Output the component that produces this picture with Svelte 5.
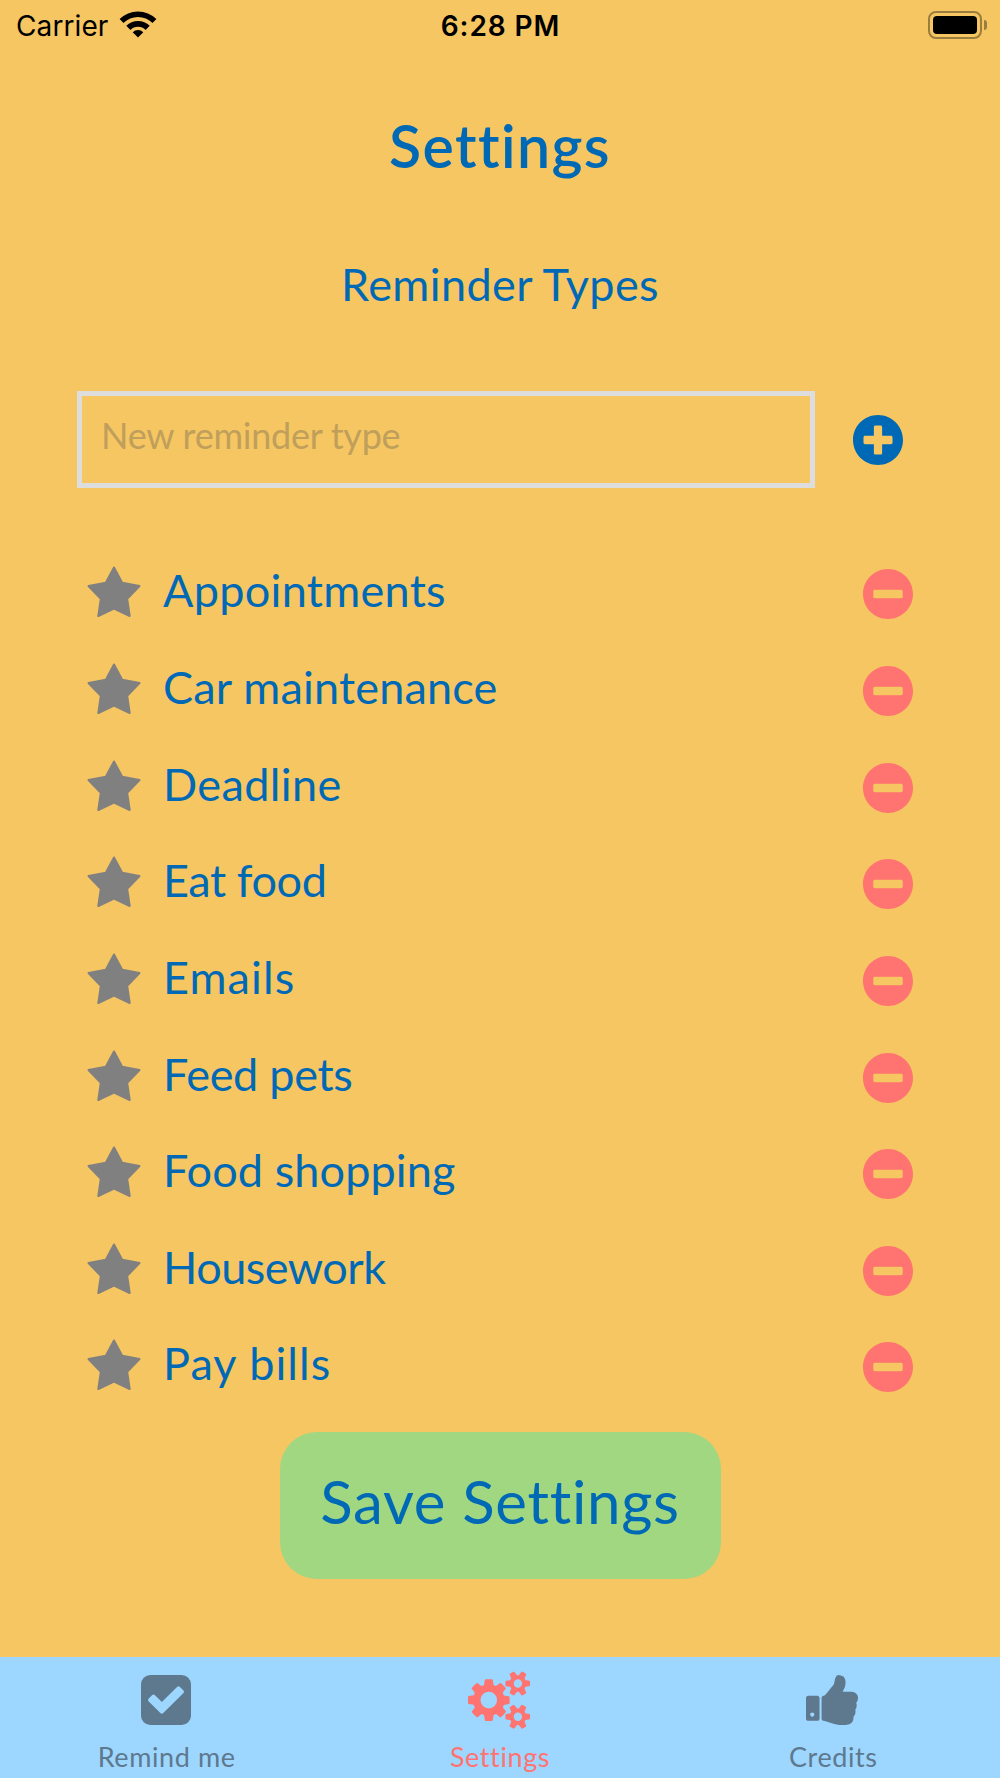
<script>
  let newType = $state('');

  let reminderTypes = $state([
    { name: 'Appointments', tracking: 0.3 },
    { name: 'Car maintenance', tracking: 0.2 },
    { name: 'Deadline', tracking: 0.4 },
    { name: 'Eat food', tracking: -0.4 },
    { name: 'Emails', tracking: 1.1 },
    { name: 'Feed pets', tracking: -0.3 },
    { name: 'Food shopping', tracking: 0.1 },
    { name: 'Housework', tracking: -0.5 },
    { name: 'Pay bills', tracking: 1.1 }
  ]);

  function addType() {
    const name = newType.trim();
    if (!name) return;
    reminderTypes.push({ name, tracking: 0 });
    newType = '';
  }

  function removeType(index) {
    reminderTypes.splice(index, 1);
  }
</script>

<div class="screen">
  <header class="status-bar">
    <div class="carrier">
      <span>Carrier</span>
      <svg class="wifi" viewBox="0 0 38 28">
        <path d="M19 27.500L13.700 22.200A7.500 7.500 0 0 1 24.300 22.200Z" />
        <path d="M7.300 15.800A16.500 16.500 0 0 1 30.700 15.800L26.600 19.900A10.700 10.700 0 0 0 11.400 19.900Z" />
        <path d="M.6 9.100A26 26 0 0 1 37.400 9.100L33.500 13A20.500 20.500 0 0 0 4.500 13Z" />
      </svg>
    </div>
    <span class="clock">6:28 PM</span>
    <div class="battery">
      <div class="battery-case"><div class="battery-level"></div></div>
      <div class="battery-nub"></div>
    </div>
  </header>

  <main>
    <h1>Settings</h1>
    <h2>Reminder Types</h2>

    <div class="new-type">
      <input type="text" bind:value={newType} placeholder="New reminder type" />
      <button class="icon-button" aria-label="Add" onclick={addType}>
        <svg class="round-icon add" viewBox="8 8 496 496">
          <path d="M256 8C119 8 8 119 8 256s111 248 248 248 248-111 248-248S393 8 256 8zM400 281c0 9-7 16-16 16h-87v87c0 9-7 16-16 16h-50c-9 0-16-7-16-16v-87h-87c-9 0-16-7-16-16v-50c0-9 7-16 16-16h87v-87c0-9 7-16 16-16h50c9 0 16 7 16 16v87h87c9 0 16 7 16 16v50z" />
        </svg>
      </button>
    </div>

    <ul>
      {#each reminderTypes as type, i}
        <li>
          <svg class="star" viewBox="0 0 54 52">
            <path d="M27 1.500L35.200 16.800L52.500 20L40.200 32.800L42.700 50L27 42.500L11.300 50L13.800 32.800L1.500 20L18.800 16.800Z" />
          </svg>
          <span class="type-name" style="letter-spacing: {type.tracking}px">{type.name}</span>
          <button class="icon-button" aria-label="Remove {type.name}" onclick={() => removeType(i)}>
            <svg class="round-icon remove" viewBox="8 8 496 496">
              <path d="M256 8C119 8 8 119 8 256s111 248 248 248 248-111 248-248S393 8 256 8zM126 297c-9 0-16-7-16-16v-50c0-9 7-16 16-16h260c9 0 16 7 16 16v50c0 9-7 16-16 16H126z" />
            </svg>
          </button>
        </li>
      {/each}
    </ul>

    <button class="save">Save Settings</button>
  </main>

  <nav>
    <a href="#remind" class="tab remind">
      <svg width="50" height="50" viewBox="128 128 1536 1536">
        <path d="M813 1299l614-614q19-19 19-45t-19-45l-102-102q-19-19-45-19t-45 19l-467 467-211-211q-19-19-45-19t-45 19l-102 102q-19 19-19 45t19 45l358 358q19 19 45 19t45-19zm851-883v960q0 119-84.500 203.500t-203.500 84.500h-960q-119 0-203.500-84.500t-84.500-203.500v-960q0-119 84.500-203.500t203.500-84.500h960q119 0 203.500 84.500t84.500 203.500z" />
      </svg>
      <span>Remind me</span>
    </a>
    <a href="#settings" class="tab settings active">
      <svg width="62.400" height="58.200" viewBox="-64 0 1920 1792">
        <path d="M832 896q0-106-75-181t-181-75-181 75-75 181 75 181 181 75 181-75 75-181zm768 512q0-52-38-90t-90-38-90 38-38 90q0 53 37.500 90.500t90.500 37.500 90.500-37.500 37.500-90.500zm0-1024q0-52-38-90t-90-38-90 38-38 90q0 53 37.500 90.500t90.500 37.500 90.500-37.500 37.500-90.500zm-384 421v185q0 10-7 19.500t-16 10.500l-155 24q-11 35-32 76 34 48 90 115 7 11 7 20 0 12-7 19-23 30-82.500 89.500t-78.500 59.500q-11 0-21-7l-115-90q-37 19-77 31-11 108-23 155-7 24-30 24h-186q-11 0-20-7.500t-10-17.500l-23-153q-34-10-75-31l-118 89q-7 7-20 7-11 0-21-8-144-133-144-160 0-9 7-19 10-14 41-53t47-61q-23-44-35-82l-152-24q-10-1-17-9.500t-7-19.500v-185q0-10 7-19.500t16-10.500l155-24q11-35 32-76-34-48-90-115-7-11-7-20 0-12 7-20 22-30 82-89t79-59q11 0 21 7l115 90q34-18 77-32 11-108 23-154 7-24 30-24h186q11 0 20 7.500t10 17.500l23 153q34 10 75 31l118-89q8-7 20-7 11 0 21 8 144 133 144 160 0 9-7 19-12 16-42 54t-45 60q23 48 34 82l152 23q10 2 17 10.500t7 19.500zm640 533v140q0 16-149 31-12 27-30 52 51 113 51 138 0 4-4 7-122 71-124 71-8 0-46-47t-52-68q-20 2-30 2t-30-2q-14 21-52 68t-46 47q-2 0-124-71-4-3-4-7 0-25 51-138-18-25-30-52-149-15-149-31v-140q0-16 149-31 13-29 30-52-51-113-51-138 0-4 4-7 4-2 35-20t59-34 30-16q8 0 46 46.500t52 67.500q20-2 30-2t30 2q51-71 92-112l6-2q4 0 124 70 4 3 4 7 0 25-51 138 17 23 30 52 149 15 149 31zm0-1024v140q0 16-149 31-12 27-30 52 51 113 51 138 0 4-4 7-122 71-124 71-8 0-46-47t-52-68q-20 2-30 2t-30-2q-14 21-52 68t-46 47q-2 0-124-71-4-3-4-7 0-25 51-138-18-25-30-52-149-15-149-31v-140q0-16 149-31 13-29 30-52-51-113-51-138 0-4 4-7 4-2 35-20t59-34 30-16q8 0 46 46.500t52 67.500q20-2 30-2t30 2q51-71 92-112l6-2q4 0 124 70 4 3 4 7 0 25-51 138 17 23 30 52 149 15 149 31z" />
      </svg>
      <span>Settings</span>
    </a>
    <a href="#credits" class="tab credits">
      <svg width="52" height="50" viewBox="64 128 1600 1536">
        <path d="M320 1344q0-26-19-45t-45-19q-27 0-45.500 19t-18.500 45q0 27 18.500 45.500t45.500 18.500q26 0 45-18.500t19-45.500zm160-512v640q0 26-19 45t-45 19h-288q-26 0-45-19t-19-45v-640q0-26 19-45t45-19h288q26 0 45 19t19 45zm1184 0q0 86-55 149 15 44 15 76 3 76-43 137 17 56 0 117-15 57-54 94 9 112-49 181-64 76-197 78h-129q-66 0-144-15.500t-121.500-29-120.500-39.500q-123-43-158-44-26-1-45-19.500t-19-44.500v-641q0-25 18-43.500t43-20.500q24-2 76-59t101-121q68-87 101-120 18-18 31-48t17.500-48.500 13.500-60.500q7-39 12.500-61t19.500-52 34-50q19-19 45-19 46 0 82.500 10.500t60 26 40 40.500 24 45 12 50 5 45 .5 39q0 38-9.500 76t-19 60-27.500 56q-3 6-10 18t-11 22-8 24h277q78 0 135 57t57 135z" />
      </svg>
      <span>Credits</span>
    </a>
  </nav>
</div>

<style>
  :global(body) {
    margin: 0;
    background: #f6c662;
  }

  .screen {
    display: flex;
    flex-direction: column;
    height: 1778px;
    overflow: hidden;
    background: #f6c662;
    color: #0069b6;
    font-family: Lato, sans-serif;
    font-variant-ligatures: none;
  }

  button {
    padding: 0;
    border: none;
    background: none;
    font-family: inherit;
    color: inherit;
    cursor: pointer;
  }

  svg {
    display: block;
    fill: currentColor;
  }

  .status-bar {
    display: grid;
    grid-template-columns: 1fr auto 1fr;
    align-items: center;
    height: 51px;
    padding: 0 13px 0 16px;
    box-sizing: border-box;
    color: #000;
    font-family: Inter, sans-serif;
    font-size: 28px;
  }

  .carrier {
    display: flex;
    align-items: center;
    gap: 11px;
    letter-spacing: 0.1px;
  }

  .wifi {
    width: 38px;
    height: 28px;
    margin-bottom: 3px;
  }

  .clock {
    margin-right: 2px;
    font-weight: 600;
    letter-spacing: 0.9px;
  }

  .battery {
    display: flex;
    align-items: center;
    justify-content: flex-end;
    gap: 2px;
    margin-bottom: 2px;
  }

  .battery-case {
    box-sizing: border-box;
    width: 54px;
    height: 28px;
    padding: 3px;
    border: 2px solid #9b7d3e;
    border-radius: 8px;
  }

  .battery-level {
    height: 18px;
    border-radius: 4px;
    background: #000;
  }

  .battery-nub {
    width: 3px;
    height: 10px;
    border-radius: 0 5px 5px 0;
    background: #9b7d3e;
  }

  main {
    display: flex;
    flex-direction: column;
    align-items: center;
    flex: 1;
  }

  h1 {
    margin: 60px 0 0;
    font-size: 59px;
    line-height: 70px;
    font-weight: 600;
    letter-spacing: 1.4px;
  }

  h2 {
    margin: 75px 0 0;
    font-size: 45px;
    line-height: 56px;
    font-weight: 400;
    letter-spacing: 0.4px;
  }

  .new-type {
    display: flex;
    align-items: center;
    align-self: stretch;
    gap: 38px;
    margin: 79px 0 0 77px;
  }

  input {
    box-sizing: border-box;
    width: 738px;
    height: 97px;
    padding: 0 19px 9px;
    border: 5px solid #ddd;
    outline: none;
    background: transparent;
    color: #0069b6;
    font-family: inherit;
    font-size: 36px;
    letter-spacing: -0.25px;
  }

  input::placeholder {
    color: #bf9f5b;
    opacity: 1;
  }

  .round-icon {
    width: 50px;
    height: 50px;
  }

  .remove {
    color: #ff7371;
  }

  ul {
    align-self: stretch;
    margin: 58px 87px 0;
    padding: 0;
    list-style: none;
  }

  li {
    display: flex;
    align-items: center;
    height: 96.650px;
  }

  .star {
    width: 54px;
    height: 52px;
    margin-bottom: 4px;
    color: #808080;
    stroke: #808080;
    stroke-width: 2;
    stroke-linejoin: round;
  }

  .type-name {
    flex: 1;
    margin: 0 0 8px 22px;
    font-size: 45px;
    line-height: 56px;
  }

  .save {
    width: 441px;
    height: 147px;
    margin-top: 16px;
    padding-bottom: 8px;
    border-radius: 37px;
    background: #a2d781;
    font-size: 60px;
    letter-spacing: 0.7px;
  }

  nav {
    display: grid;
    grid-template-columns: repeat(3, 1fr);
    height: 121px;
    background: #9dd6ff;
  }

  .tab {
    display: flex;
    flex-direction: column;
    align-items: center;
    justify-content: space-between;
    padding-top: 18px;
    color: #5e788e;
    font-size: 27px;
    line-height: 43px;
    letter-spacing: 0.6px;
    text-decoration: none;
  }

  .tab svg {
    margin-right: 2px;
  }

  .tab.active {
    padding-top: 14px;
    color: #ff7371;
  }
</style>
